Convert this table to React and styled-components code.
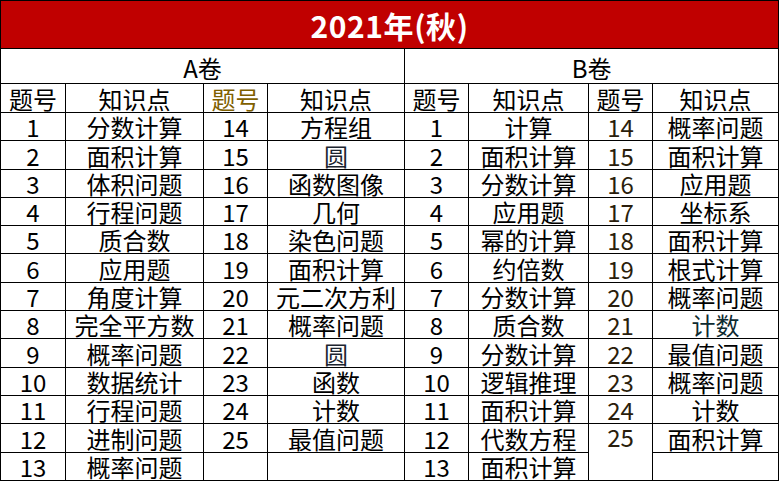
import React from "react";
import styled, { createGlobalStyle } from "styled-components";

const Global = createGlobalStyle`
    html, body { margin: 0; padding: 0; background: #fff; }
    body { font-family: "Noto Sans CJK SC", "Noto Sans", sans-serif; }
`;

const Sheet = styled.table`
    border-collapse: collapse;
    table-layout: fixed;
    width: 778px;
    color: #000;
`;

const TitleCell = styled.td`
    height: 47px;
    background: #c00000;
    color: #fff;
    font-size: 30px;
    font-weight: 700;
    line-height: 40px;
    text-align: center;
    border: 1px solid #000;
    padding: 0;
    letter-spacing: 0.6px;
`;

const PaperCell = styled.td`
    height: 33px;
    font-size: 24px;
    text-align: center;
    vertical-align: bottom;
    line-height: 28px;
    border: 1px solid #000;
    padding: 0 0 1px;
`;

const Cell = styled.td`
    height: ${({ h }) => h || "26.3px"};
    font-size: 24px;
    line-height: 24px;
    text-align: center;
    vertical-align: ${({ top }) => (top ? "top" : "bottom")};
    border: 1px solid #000;
    padding: ${({ top }) => (top ? "1px 0 0" : "0 0 1px")};
    overflow: hidden;
    white-space: nowrap;
    color: ${({ color }) => color || "#000"};
`;

const colsA = [65, 138, 64, 137];
const colsB = [64, 120, 64, 126];

const paperA = {
    left: ["分数计算", "面积计算", "体积问题", "行程问题", "质合数", "应用题", "角度计算", "完全平方数", "概率问题", "数据统计", "行程问题", "进制问题", "概率问题"],
    right: ["方程组", "圆", "函数图像", "几何", "染色问题", "面积计算", "元二次方利", "概率问题", "圆", "函数", "计数", "最值问题"],
};

const paperB = {
    left: ["计算", "面积计算", "分数计算", "应用题", "幂的计算", "约倍数", "分数计算", "质合数", "分数计算", "逻辑推理", "面积计算", "代数方程", "面积计算"],
    right: ["概率问题", "面积计算", "应用题", "坐标系", "面积计算", "根式计算", "概率问题", "计数", "最值问题", "概率问题", "计数", "面积计算"],
};

const tint = {
    "圆": "#1c2530",
};

function Half({ paper, row, isB }) {
    const i = row;
    const cells = [
        <Cell key="n1">{i + 1}</Cell>,
        <Cell key="t1">{paper.left[i]}</Cell>,
    ];
    if (i < 12) {
        const top = isB && i === 11;
        cells.push(
            <Cell key="n2" top={top} rowSpan={top ? 2 : 1} color={isB ? "#2a1e0c" : undefined}>
                {i + 14}
            </Cell>
        );
        cells.push(
            <Cell key="t2" color={tint[paper.right[i]] || (isB && i === 7 ? "#0e2a30" : undefined)}>
                {paper.right[i]}
            </Cell>
        );
    } else {
        if (!isB) cells.push(<Cell key="n2" />);
        cells.push(<Cell key="t2" />);
    }
    return cells;
}

export default function App() {
    const rows = Array.from({ length: 13 }, (_, i) => i);
    return (
        <>
            <Global />
            <Sheet>
                <colgroup>
                    {[...colsA, ...colsB].map((w, i) => (
                        <col key={i} style={{ width: w }} />
                    ))}
                </colgroup>
                <tbody>
                    <tr>
                        <TitleCell colSpan={8}>2021年(秋)</TitleCell>
                    </tr>
                    <tr>
                        <PaperCell colSpan={4}>A卷</PaperCell>
                        <PaperCell colSpan={4}>B卷</PaperCell>
                    </tr>
                    <tr>
                        <Cell h="27px">题号</Cell>
                        <Cell h="27px">知识点</Cell>
                        <Cell h="27px" color="#7f6000">题号</Cell>
                        <Cell h="27px">知识点</Cell>
                        <Cell h="27px">题号</Cell>
                        <Cell h="27px">知识点</Cell>
                        <Cell h="27px">题号</Cell>
                        <Cell h="27px">知识点</Cell>
                    </tr>
                    {rows.map((i) => (
                        <tr key={i}>
                            <Half paper={paperA} row={i} />
                            <Half paper={paperB} row={i} isB />
                        </tr>
                    ))}
                </tbody>
            </Sheet>
        </>
    );
}
